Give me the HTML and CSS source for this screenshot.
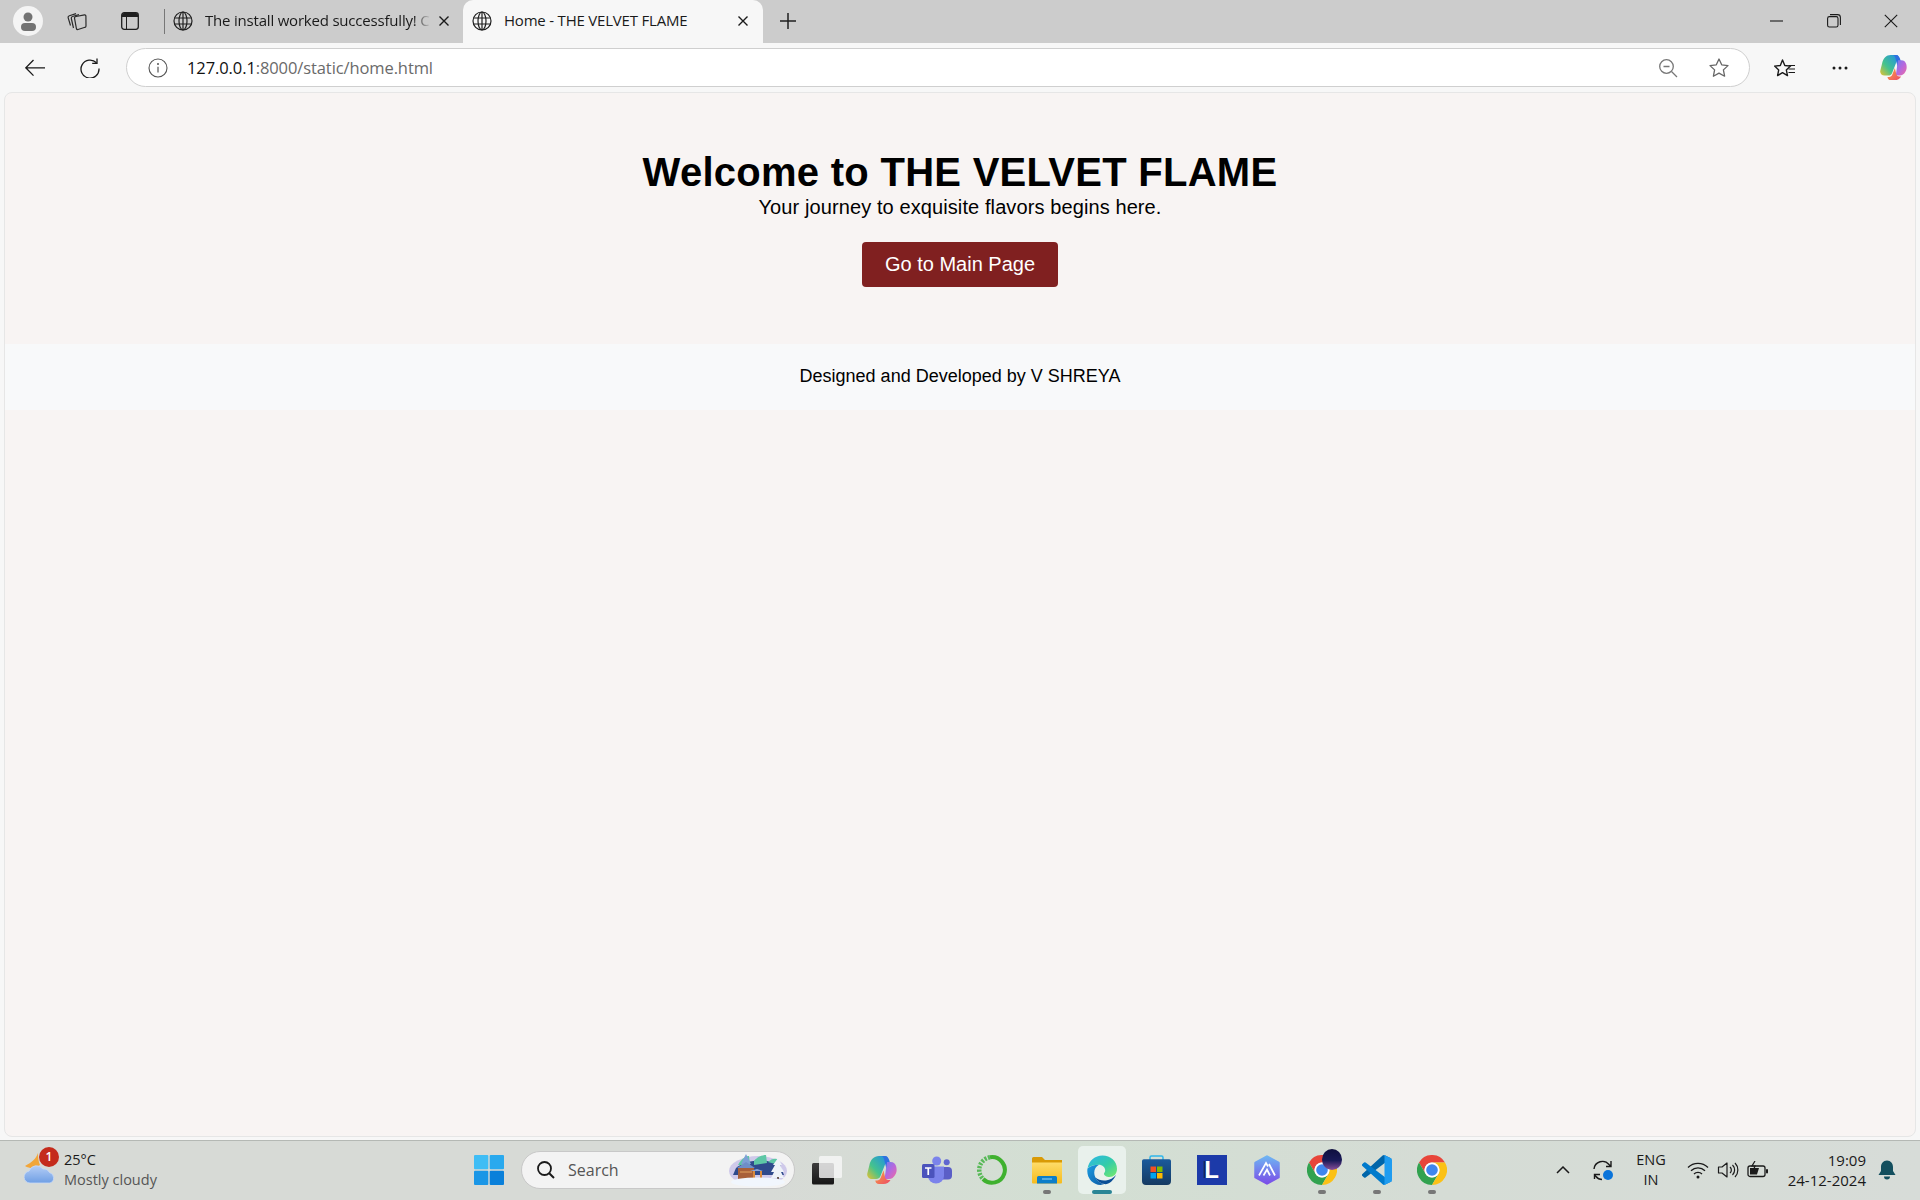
FILE: index.html
```html
<!DOCTYPE html>
<html lang="en">
<head>
    <meta charset="UTF-8">
    <title>Home - THE VELVET FLAME</title>
    <link rel="stylesheet" href="styles.css">
</head>
<body>
    <svg class="defs" width="0" height="0">
        <defs>
            <symbol id="globe" viewBox="0 0 20 20">
                <g fill="none" stroke="#1f1f1f" stroke-width="1.2">
                    <circle cx="10" cy="10" r="9"/>
                    <ellipse cx="10" cy="10" rx="4" ry="9"/>
                    <path d="M1.500 7h17M1.500 13h17M10 1v18"/>
                </g>
            </symbol>
            <symbol id="close" viewBox="0 0 12 12">
                <path d="M1.500 1.500l9 9M10.500 1.500l-9 9" fill="none" stroke="#1a1a1a" stroke-width="1.400"/>
            </symbol>
            <linearGradient id="copilotA" x1="0" y1="1" x2="1" y2="0">
                <stop offset="0" stop-color="#e8c12e"/>
                <stop offset=".4" stop-color="#45c38d"/>
                <stop offset="1" stop-color="#1f8fe6"/>
            </linearGradient>
            <linearGradient id="copilotB" x1="0" y1="0" x2="1" y2="1">
                <stop offset="0" stop-color="#6d7ff0"/>
                <stop offset=".5" stop-color="#b568de"/>
                <stop offset="1" stop-color="#f06aa2"/>
            </linearGradient>
            <linearGradient id="copilotC" x1="0" y1="0" x2="1" y2="1">
                <stop offset="0" stop-color="#f9a63f"/>
                <stop offset="1" stop-color="#ec4a68"/>
            </linearGradient>
            <linearGradient id="edgeA" x1="0" y1="0" x2="1" y2="1">
                <stop offset="0" stop-color="#2bb5ec"/>
                <stop offset=".55" stop-color="#35cda6"/>
                <stop offset="1" stop-color="#78ea6a"/>
            </linearGradient>
            <linearGradient id="edgeB" x1="0" y1="0" x2="1" y2="1">
                <stop offset="0" stop-color="#1b9de2"/>
                <stop offset="1" stop-color="#0c59a4"/>
            </linearGradient>
            <linearGradient id="storeBag" x1="0" y1="0" x2="0" y2="1">
                <stop offset="0" stop-color="#1a5a9c"/>
                <stop offset="1" stop-color="#153a62"/>
            </linearGradient>
            <linearGradient id="folderFront" x1="0" y1="0" x2="0" y2="1">
                <stop offset="0" stop-color="#fedc6a"/>
                <stop offset="1" stop-color="#f6bb1c"/>
            </linearGradient>
            <linearGradient id="hex" x1="0" y1="0" x2="0" y2="1">
                <stop offset="0" stop-color="#6fb4f2"/>
                <stop offset="1" stop-color="#7a4fe8"/>
            </linearGradient>
            <linearGradient id="cloud" x1="0" y1="0" x2="0" y2="1">
                <stop offset="0" stop-color="#b4cdf6"/>
                <stop offset="1" stop-color="#6f9fe4"/>
            </linearGradient>
            <symbol id="copilot" viewBox="0 0 30 30">
                <path d="M12 1h6.500c1.600 0 2.400 1.200 1.800 2.700L13.500 21c-.9 2.200-2.300 3-4.300 3H5C2 24-.3 21.500.3 18.500l2-8C3.500 4.500 7 1 12 1z" fill="url(#copilotA)"/>
                <path d="M17 1c2.800 0 4.500 1.500 5.300 4.300l2.700 10.700h-5l-3-12c-.4-1.600-1-2.500-2.500-3z" fill="#2f6fe0"/>
                <path d="M20 7h3.500c3.200 0 5 1.800 5.700 4.500.9 3.500.3 6-1 8.300-1.500 2.800-3.500 4.200-6.200 4.200h-4.500z" fill="url(#copilotB)"/>
                <path d="M12 29c-2.400 0-3.400-1.300-3.700-3.500H10c2 0 3-1 3.800-3l2.700-7 1.500 6.500c.5 2.300 1.900 3 3.500 3h2c-1.500 2.700-3.800 4-7 4z" fill="url(#copilotC)"/>
            </symbol>
            <symbol id="chrome" viewBox="0 0 30 30">
                <path d="M2 7.500A15 15 0 0 1 28 7.500H15A7.500 7.500 0 0 0 8.500 18.750z" fill="#e8453a"/>
                <path d="M2 7.500L8.500 18.750A7.500 7.500 0 0 0 21.500 18.750L15 30A15 15 0 0 1 2 7.500z" fill="#31a24f"/>
                <path d="M28 7.500A15 15 0 0 1 15 30L21.500 18.750A7.500 7.500 0 0 0 15 7.500z" fill="#fbc116"/>
                <circle cx="15" cy="15" r="7.500" fill="#fff"/>
                <circle cx="15" cy="15" r="5.800" fill="#3f86ee"/>
            </symbol>
        </defs>
    </svg>

    <div class="tabstrip">
        <div class="profile">
            <svg class="icon-profile" viewBox="0 0 30 30"><circle cx="15" cy="15" r="15" fill="#f4f4f4"/><circle cx="15" cy="11" r="4.500" fill="#737373"/><rect x="8" y="17" width="15" height="8" rx="4" fill="#737373"/></svg>
        </div>
        <button class="strip-btn">
            <svg class="icon-20" viewBox="0 0 20 20"><g fill="none" stroke="#2a2a2a" stroke-width="1.200" stroke-linejoin="round"><path d="M9 5.500l8.500-1.700c.7-.1 1.300.3 1.400 1l.1 10.200c0 .7-.4 1.200-1 1.300L11 18.500c-.8.200-1.400-.2-1.600-1L7.500 7.200c-.2-.8.500-1.500 1.500-1.700z"/><path d="M6.500 17L4.300 7.500c-.2-1 .3-1.800 1.200-2L12 3.600"/><path d="M3.500 14.500L1.200 6.800c-.3-1 .2-1.800 1.200-2.100L9 2.600"/></g></svg>
        </button>
        <button class="strip-btn">
            <svg class="icon-workspace" viewBox="0 0 18 18"><rect x=".7" y=".7" width="16.600" height="16.600" rx="2.500" fill="none" stroke="#1f1f1f" stroke-width="1.300"/><path d="M1 3a2 2 0 0 1 2-2h12a2 2 0 0 1 2 2v2H1z" fill="#1f1f1f"/><path d="M5.500 5v12" stroke="#1f1f1f" stroke-width="1"/></svg>
        </button>
        <span class="strip-sep"></span>
        <div class="tab">
            <svg class="icon-globe"><use href="#globe"/></svg>
            <span class="tab-title tab-title-fade">The install worked successfully! C</span>
            <svg class="icon-close"><use href="#close"/></svg>
        </div>
        <div class="tab tab-active">
            <svg class="icon-globe"><use href="#globe"/></svg>
            <span class="tab-title">Home - THE VELVET FLAME</span>
            <svg class="icon-close"><use href="#close"/></svg>
        </div>
        <button class="new-tab">
            <svg class="icon-plus" viewBox="0 0 18 18"><path d="M9 1v16M1 9h16" stroke="#1f1f1f" stroke-width="1.500"/></svg>
        </button>
        <div class="win-controls">
            <svg class="icon-win" viewBox="0 0 14 14"><path d="M0 7h13" stroke="#1a1a1a" stroke-width="1.100"/></svg>
            <svg class="icon-win" viewBox="0 0 14 14"><rect x=".6" y="2.600" width="10.400" height="10.400" rx="1.800" fill="none" stroke="#1a1a1a" stroke-width="1.100"/><path d="M3 .6h7.500c1.600 0 2.900 1.300 2.900 2.900V11" fill="none" stroke="#1a1a1a" stroke-width="1.100"/></svg>
            <svg class="icon-win" viewBox="0 0 14 14"><path d="M.8.8l12.400 12.400M13.200.8L.8 13.200" stroke="#1a1a1a" stroke-width="1.100"/></svg>
        </div>
    </div>

    <div class="toolbar">
        <button class="nav-btn">
            <svg class="icon-20" viewBox="0 0 20 20"><path d="M8.500 2L.8 9.800l7.700 7.800M.8 9.800H20" fill="none" stroke="#1a1a1a" stroke-width="1.300"/></svg>
        </button>
        <button class="nav-btn nav-reload">
            <svg class="icon-20" viewBox="0 0 20 20"><path d="M16.500 4.800A9 9 0 1 0 19 10.500" fill="none" stroke="#1a1a1a" stroke-width="1.300"/><path d="M17 .5V5.300h-4.800" fill="none" stroke="#1a1a1a" stroke-width="1.300"/></svg>
        </button>
        <div class="address">
            <svg class="icon-info" viewBox="0 0 20 20"><circle cx="10" cy="10" r="9" fill="none" stroke="#555" stroke-width="1.100"/><path d="M10 8.800v5.700" stroke="#555" stroke-width="1.200"/><circle cx="10" cy="6" r="1" fill="#555"/></svg>
            <span class="url"><span class="url-host">127.0.0.1</span>:8000/static/home.html</span>
            <svg class="icon-zoom" viewBox="0 0 20 20"><circle cx="8.500" cy="8.500" r="6.800" fill="none" stroke="#777" stroke-width="1.300"/><path d="M13.500 13.500L19 19M5.500 8.500h6" stroke="#777" stroke-width="1.300"/></svg>
            <svg class="icon-star" viewBox="0 0 22 22"><path d="M11 2l2.700 5.800 6.300.8-4.600 4.300 1.200 6.300L11 16.100l-5.600 3.100 1.200-6.300L2 8.600l6.300-.8z" fill="none" stroke="#666" stroke-width="1.300" stroke-linejoin="round"/></svg>
        </div>
        <button class="tool-btn tool-fav">
            <svg class="icon-fav" viewBox="0 0 22 22"><path d="M8.500 1l2.300 5.500 5.700.6-4.200 3.800 1.200 5.700-5-3-4.900 3 1.100-5.700L.6 7.100l5.700-.6z" transform="translate(0 2)" fill="none" stroke="#1a1a1a" stroke-width="1.400" stroke-linejoin="round"/><path d="M14.500 8.500H21M14.500 12H21M14.500 15.500H21" stroke="#1a1a1a" stroke-width="1.200"/></svg>
        </button>
        <button class="tool-btn tool-more">
            <svg class="icon-dots" viewBox="0 0 16 4"><circle cx="2" cy="2" r="1.500" fill="#1a1a1a"/><circle cx="8" cy="2" r="1.500" fill="#1a1a1a"/><circle cx="14" cy="2" r="1.500" fill="#1a1a1a"/></svg>
        </button>
        <button class="tool-btn tool-copilot">
            <svg class="icon-copilot"><use href="#copilot"/></svg>
        </button>
    </div>

    <main class="page">
        <section class="hero">
            <h1>Welcome to THE VELVET FLAME</h1>
            <p>Your journey to exquisite flavors begins here.</p>
            <a class="main-link" href="#">Go to Main Page</a>
        </section>
        <footer class="credit">Designed and Developed by V SHREYA</footer>
    </main>

    <div class="taskbar">
        <div class="weather">
            <div class="weather-icon">
                <svg class="icon-weather" viewBox="0 0 32 38"><path d="M14 2c-2 6-6 9-13 13 5 3 11 3 15-1-1.500-3-2-7-2-12z" fill="#f2a63a"/><path d="M6 32a6 6 0 0 1-1-11.900A8 8 0 0 1 19 18a6.500 6.500 0 0 1 6.500 3.500A5.500 5.500 0 0 1 26 32z" fill="url(#cloud)" stroke="#c9dbf7" stroke-width=".8"/></svg>
                <span class="badge">1</span>
            </div>
            <div class="weather-text">
                <span class="temp">25°C</span>
                <span class="cond">Mostly cloudy</span>
            </div>
        </div>
        <button class="task-start">
            <svg class="icon-start" viewBox="0 0 30 30"><rect width="14.300" height="14.300" rx="1" fill="#3fbdf5"/><rect x="15.700" width="14.300" height="14.300" rx="1" fill="#29a9ee"/><rect y="15.700" width="14.300" height="14.300" rx="1" fill="#1a96e6"/><rect x="15.700" y="15.700" width="14.300" height="14.300" rx="1" fill="#0a80da"/></svg>
        </button>
        <div class="task-search">
            <svg class="icon-search" viewBox="0 0 20 20"><circle cx="8.500" cy="8.500" r="6.500" fill="none" stroke="#1a1a1a" stroke-width="1.800"/><path d="M13.200 13.200L18 18" stroke="#1a1a1a" stroke-width="2"/></svg>
            <span class="search-label">Search</span>
            <svg class="search-art" viewBox="0 0 60 34">
                <ellipse cx="30" cy="18" rx="29" ry="15" fill="#cfc9ea"/>
                <path d="M8 15c10-9 32-10 44-3l4 10H5z" fill="#2f4a8c"/>
                <path d="M10 12c4-7 8-9 11-9l1 9zM26 8c3-4 8-6 12-6l1 8-13 2zM40 9c3-3 6-4 9-3l2 6z" fill="#5ec7a6"/>
                <path d="M18 1l5 10H13z" fill="#7ea0d6"/>
                <path d="M9 15l9-6 9 6z" fill="#6f8ec8"/>
                <rect x="10" y="15" width="16" height="11" fill="#a8603a"/>
                <path d="M12 19h12" stroke="#e3a25f" stroke-width="1"/>
                <path d="M22 18l7-2 6 2z" fill="#8aa6d8"/>
                <path d="M25 18h2v8h-2zM32 18h2v8h-2z" fill="#d98a3d"/>
                <path d="M50 5l4 7h-2l4 7h-3l3 6H43l3-6h-3l4-7h-2z" fill="#eef2f8"/>
                <rect x="49" y="24" width="2" height="4" fill="#6a5a55"/>
                <ellipse cx="30" cy="29" rx="27" ry="4.500" fill="#f1f6fd"/>
            </svg>
        </div>
        <div class="task-apps">
            <button class="app">
                <svg class="icon-app" viewBox="0 0 30 30"><defs><linearGradient id="tileDark" x1="0" y1="0" x2="0" y2="1"><stop offset="0" stop-color="#3c3c3c"/><stop offset="1" stop-color="#161616"/></linearGradient></defs><rect x="0" y="8" width="22" height="21.500" rx="1.500" fill="url(#tileDark)"/><rect x="7" y="1" width="23" height="22" rx="1.500" fill="#f6f6f6" fill-opacity=".82"/></svg>
            </button>
            <button class="app">
                <svg class="icon-app"><use href="#copilot"/></svg>
            </button>
            <button class="app">
                <svg class="icon-app" viewBox="0 0 30 30"><circle cx="24.700" cy="7.300" r="3" fill="#5f66d0"/><rect x="17" y="12" width="13" height="12.500" rx="4" fill="#5b5fc7"/><circle cx="14.700" cy="6" r="4.500" fill="#7b83eb"/><path d="M6 11.500h16v9.500a8 7.500 0 0 1-16 0z" fill="#7b83eb"/><rect x="0" y="9" width="12.500" height="14" rx="1.500" fill="#4b53bc"/><path d="M3 12.300h6.500v1.500H7.100v6.200H5.400v-6.200H3z" fill="#fff"/></svg>
            </button>
            <button class="app">
                <svg class="icon-app" viewBox="0 0 30 30"><path d="M13 2.300A12.800 12.800 0 1 1 6 24" fill="none" stroke="#3fb12f" stroke-width="4"/><path d="M13 2.300A12.800 12.800 0 0 0 6 24" fill="none" stroke="#58b958" stroke-width="4.500" stroke-dasharray="2.200 1.300"/></svg>
            </button>
            <button class="app app-open">
                <svg class="icon-app" viewBox="0 0 30 30"><path d="M0 3.500A1.500 1.500 0 0 1 1.500 2H10l3 3h17v20H0z" fill="#d99a06"/><path d="M0 7.500h30v20a1 1 0 0 1-1 1H1a1 1 0 0 1-1-1z" fill="url(#folderFront)"/><path d="M6.500 21h17A1.500 1.500 0 0 1 25 22.500v6H5v-6A1.500 1.500 0 0 1 6.500 21z" fill="#0c7ec9"/><path d="M10 24h10" stroke="#8fd0f5" stroke-width="1.100"/></svg>
            </button>
            <button class="app app-active">
                <svg class="icon-app icon-edge" viewBox="0 0 30 30"><path d="M.5 13.500C2 5.500 8 .5 15.500.5 23.500.5 30 6 30 14c0 5-3.500 8-7.500 8-3 0-5.500-1.300-5.500-3.200 0-1 1.200-1.500 1.200-3.500 0-3-2.700-5.500-6.500-5.500-5 0-9 1.500-11.700 3.700z" fill="url(#edgeA)"/><path d="M.5 13.500C3 11.200 7 9.800 12 9.800c-4.500 2.500-6 7.500-3.700 12.500 1.700 3.500 5 6 9 6.800-1 .4-2.300.9-3.800.9C5.500 30-1 22.500.5 13.500z" fill="url(#edgeB)"/><path d="M29 20c-2.800 6-7.500 9.800-11.700 9.100-4-.8-7.300-3.300-9-6.800 3 2.700 6.700 3.700 10.700 3.200 4-.5 7.500-2.600 10-5.500z" fill="#0b4f96"/></svg>
            </button>
            <button class="app">
                <svg class="icon-app" viewBox="0 0 30 30"><path d="M8 5V2.500A1.500 1.500 0 0 1 9.500 1h10A1.500 1.500 0 0 1 21 2.500V5" fill="none" stroke="#2fb6ea" stroke-width="1.500"/><path d="M0 6a1.800 1.800 0 0 1 1.800-1.800h25.400A1.800 1.800 0 0 1 29 6v20a4 4 0 0 1-4 4H4a4 4 0 0 1-4-4z" fill="url(#storeBag)"/><rect x="8.500" y="11.500" width="5.500" height="5.500" fill="#f25022"/><rect x="15" y="11.500" width="5.500" height="5.500" fill="#7fba00"/><rect x="8.500" y="18" width="5.500" height="5.500" fill="#00a4ef"/><rect x="15" y="18" width="5.500" height="5.500" fill="#ffb900"/></svg>
            </button>
            <button class="app">
                <span class="app-letter">L</span>
            </button>
            <button class="app">
                <svg class="icon-app" viewBox="0 0 30 30"><path d="M15 1.500l11.500 6.300v14.400L15 28.500 3.500 22.200V7.800z" fill="url(#hex)" stroke="url(#hex)" stroke-width="2.500" stroke-linejoin="round"/><path d="M7 20.500L14 8l2 3.500M11.500 20.500l3.500-6 3 6M17 9l6 11.500" fill="none" stroke="#fff" stroke-width="1.700"/></svg>
            </button>
            <button class="app app-open">
                <svg class="icon-app"><use href="#chrome"/></svg>
                <span class="app-blob"></span>
            </button>
            <button class="app app-open">
                <svg class="icon-app" viewBox="0 0 100 100"><path d="M96.460 10.800L75.860.870a6.230 6.230 0 0 0-7.110 1.210L1.300 63.580a4.170 4.170 0 0 0 0 6.160l5.510 5.010a4.170 4.170 0 0 0 5.320.24L93.370 13.370c2.730-2.070 6.640-.13 6.640 3.300v-.24a6.250 6.250 0 0 0-3.540-5.630z" fill="#0065a9"/><path d="M96.460 89.200l-20.600 9.920a6.230 6.230 0 0 1-7.110-1.210L1.300 36.420a4.170 4.170 0 0 1 0-6.160l5.510-5.010a4.170 4.170 0 0 1 5.320-.24l81.240 61.620c2.730 2.070 6.640.13 6.640-3.300v.24a6.250 6.250 0 0 1-3.540 5.630z" fill="#007acc"/><path d="M75.860 99.130a6.230 6.230 0 0 1-7.110-1.200c2.310 2.310 6.250.67 6.250-2.600V4.670c0-3.270-3.940-4.900-6.250-2.600a6.230 6.230 0 0 1 7.110-1.200l20.600 9.910A6.250 6.250 0 0 1 100 16.430v67.140a6.250 6.250 0 0 1-3.540 5.630z" fill="#1f9cf0"/></svg>
            </button>
            <button class="app app-open">
                <svg class="icon-app"><use href="#chrome"/></svg>
            </button>
        </div>
        <div class="tray">
            <svg class="icon-chevron" viewBox="0 0 14 8"><path d="M1 7l6-6 6 6" fill="none" stroke="#1a1a1a" stroke-width="1.500"/></svg>
            <div class="tray-sync">
                <svg class="icon-sync" viewBox="0 0 22 22"><path d="M2 10a8.500 8.500 0 0 1 15-4.500l2 2M19 2v5.500h-5" fill="none" stroke="#1a1a1a" stroke-width="1.400"/><path d="M10 20.500a8 8 0 0 1-6-3l-1.500-1.500M2.500 20v-4.500H8" fill="none" stroke="#1a1a1a" stroke-width="1.400"/><circle cx="16" cy="16" r="5" fill="#0a74da"/></svg>
            </div>
            <div class="lang"><span>ENG</span><span>IN</span></div>
            <svg class="icon-wifi" viewBox="0 0 22 18"><path d="M1 6.500a14 14 0 0 1 20 0M4 9.800a10 10 0 0 1 14 0M7 13a5.600 5.600 0 0 1 8 0" fill="none" stroke="#1a1a1a" stroke-width="1.300"/><circle cx="11" cy="16" r="1.500" fill="#1a1a1a"/></svg>
            <svg class="icon-vol" viewBox="0 0 22 18"><path d="M1.500 6h3.500L10 2v14l-5-4H1.500z" fill="none" stroke="#1a1a1a" stroke-width="1.200" stroke-linejoin="round"/><path d="M13 6a4 4 0 0 1 0 6M15.500 4a7 7 0 0 1 0 10M18 2a10 10 0 0 1 0 14" fill="none" stroke="#1a1a1a" stroke-width="1.200"/></svg>
            <svg class="icon-batt" viewBox="0 0 22 18"><rect x="1" y="5" width="17" height="10.500" rx="2" fill="none" stroke="#1a1a1a" stroke-width="1.300"/><path d="M3 7h9l-2 6.500H3z" fill="#1a1a1a"/><rect x="19" y="8" width="2" height="4.500" rx="1" fill="#1a1a1a"/><path d="M8 0l-3 5h3l-1.500 4" fill="none" stroke="#1a1a1a" stroke-width="1.200"/></svg>
            <div class="clock"><span>19:09</span><span>24-12-2024</span></div>
            <svg class="icon-bell" viewBox="0 0 18 20"><path d="M9 .5c3.800 0 6 3 6 6.500v4l2.500 4h-17L3 11V7C3 3.500 5.200.5 9 .5z" fill="#134f5e"/><path d="M6 16.500h6a3 3 0 0 1-6 0z" fill="#134f5e"/></svg>
        </div>
    </div>
</body>
</html>
```

FILE: styles.css
```css
* {
    box-sizing: border-box;
}

html, body {
    margin: 0;
    padding: 0;
    height: 1200px;
    overflow: hidden;
}

body {
    display: flex;
    flex-direction: column;
    font-family: "Open Sans", "Noto Sans", sans-serif;
    background-color: #f7f7f7;
    color: #1a1a1a;
}

button {
    background: none;
    border: none;
    padding: 0;
    display: flex;
    align-items: center;
    justify-content: center;
}

svg {
    display: block;
    flex: none;
}

.defs {
    position: absolute;
}

.icon-20 {
    width: 20px;
    height: 20px;
}

/* tab strip */
.tabstrip {
    height: 43px;
    flex: none;
    display: flex;
    align-items: center;
    background-color: #cccccc;
    padding: 0 0 1px 13px;
}

.profile {
    width: 30px;
    height: 30px;
    margin-right: 19px;
}

.icon-profile {
    width: 30px;
    height: 30px;
}

.strip-btn {
    width: 30px;
    height: 30px;
    margin-right: 23px;
}

.strip-btn + .strip-btn {
    margin-right: 19px;
}

.icon-workspace {
    width: 18px;
    height: 18px;
}

.strip-sep {
    width: 1px;
    height: 25px;
    background-color: #777;
}

.tab {
    width: 298px;
    height: 43px;
    align-self: flex-start;
    display: flex;
    align-items: center;
    padding: 0 0 1px 8px;
    font-size: 15px;
}

.tab-active {
    width: 300px;
    background-color: #f7f7f7;
    border-radius: 10px 10px 0 0;
    padding-left: 9px;
}

.icon-globe {
    width: 20px;
    height: 20px;
    margin-right: 12px;
}

.tab-title {
    width: 226px;
    white-space: nowrap;
    letter-spacing: -.2px;
    margin-top: -2px;
}

.tab-title-fade {
    -webkit-mask-image: linear-gradient(to right, #000 92%, transparent 100%);
    mask-image: linear-gradient(to right, #000 92%, transparent 100%);
}

.icon-close {
    width: 12px;
    height: 12px;
    margin-left: 7px;
}

.new-tab {
    width: 50px;
    height: 43px;
    align-self: flex-start;
    padding-bottom: 1px;
}

.icon-plus {
    width: 18px;
    height: 18px;
}

.win-controls {
    margin-left: auto;
    display: flex;
    align-items: center;
    gap: 43px;
    padding-right: 22px;
}

.icon-win {
    width: 14px;
    height: 14px;
}

/* address bar row */
.toolbar {
    height: 49px;
    flex: none;
    display: flex;
    align-items: flex-start;
    background-color: #f7f7f7;
    padding: 5px 0 0 25px;
}

.nav-btn {
    width: 20px;
    height: 39px;
    margin-right: 35px;
}

.nav-reload {
    margin-right: 26px;
}

.address {
    width: 1624px;
    height: 39px;
    display: flex;
    align-items: center;
    background-color: #fff;
    border: 1px solid #cfcfcf;
    border-radius: 20px;
    padding-left: 21px;
}

.icon-info {
    width: 20px;
    height: 20px;
    margin-right: 19px;
}

.url {
    font-size: 16.5px;
    letter-spacing: -.1px;
    color: #6a6a6a;
}

.url-host {
    color: #111;
}

.icon-zoom {
    width: 20px;
    height: 20px;
    margin-left: auto;
    margin-right: 30px;
}

.icon-star {
    width: 22px;
    height: 22px;
    margin-right: 19px;
}

.tool-btn {
    height: 39px;
}

.tool-fav {
    width: 22px;
    margin-left: 24px;
}

.icon-fav {
    width: 22px;
    height: 22px;
}

.tool-more {
    width: 16px;
    margin-left: 36px;
}

.icon-dots {
    width: 16px;
    height: 4px;
}

.tool-copilot {
    width: 30px;
    margin-left: 30px;
}

.icon-copilot {
    width: 27px;
    height: 27px;
}

/* page */
.page {
    height: 1045px;
    flex: none;
    margin: 0 4px;
    background-color: #f8f4f3;
    border: 1px solid #e6e6e6;
    border-radius: 8px;
    text-align: center;
    font-family: "Liberation Sans", Arial, sans-serif;
    color: #000;
}

.hero {
    padding-top: 56px;
    height: 251px;
}

.hero h1 {
    margin: 0;
    font-size: 40px;
    line-height: 46px;
    font-weight: bold;
    letter-spacing: .27px;
}

.hero p {
    margin: 1px 0 0;
    font-size: 20px;
    line-height: 23px;
    letter-spacing: .1px;
}

.main-link {
    display: inline-block;
    margin-top: 23px;
    padding: 10px 23px;
    font-size: 20px;
    line-height: 25px;
    color: #fff;
    background-color: #802020;
    border-radius: 4px;
    text-decoration: none;
}

.credit {
    background-color: #f8f9fa;
    padding: 22px 0 23px;
    font-size: 18px;
    line-height: 21px;
}

/* taskbar */
.taskbar {
    position: fixed;
    left: 0;
    right: 0;
    bottom: 0;
    height: 60px;
    display: flex;
    align-items: center;
    padding-bottom: 1px;
    background: linear-gradient(90deg, #d7dad6 0%, #d7dad6 40%, #d3dfd3 55%, #d5dcd5 75%, #d7dcd8 100%);
    border-top: 1px solid #b4b8b4;
}

.weather {
    width: 464px;
    display: flex;
    align-items: center;
    padding-left: 24px;
}

.weather-icon {
    position: relative;
    width: 32px;
    height: 38px;
    margin-right: 8px;
}

.icon-weather {
    width: 32px;
    height: 38px;
}

.badge {
    position: absolute;
    left: 15px;
    top: -4px;
    width: 20px;
    height: 20px;
    border-radius: 50%;
    background-color: #c42b1c;
    color: #fff;
    font-size: 12px;
    font-weight: 600;
    line-height: 20px;
    text-align: center;
}

.weather-text {
    display: flex;
    flex-direction: column;
    font-size: 14.5px;
    line-height: 20px;
}

.temp {
    color: #1a1a1a;
}

.cond {
    color: #555;
}

.task-start {
    width: 50px;
    height: 58px;
}

.icon-start {
    width: 30px;
    height: 30px;
}

.task-search {
    width: 274px;
    height: 38px;
    margin-left: 7px;
    display: flex;
    align-items: center;
    background-color: #f3f3f3;
    border: 1px solid #c8c8c8;
    border-radius: 19px;
    padding-left: 14px;
}

.icon-search {
    width: 20px;
    height: 20px;
    margin-right: 12px;
}

.search-label {
    font-size: 16px;
    color: #555;
}

.search-art {
    width: 60px;
    height: 34px;
    margin-left: auto;
    margin-right: 6px;
}

.task-apps {
    display: flex;
    align-items: center;
    margin-left: 4px;
}

.app {
    position: relative;
    width: 55px;
    height: 48px;
}

.icon-app {
    width: 30px;
    height: 30px;
}

.app-open::after {
    content: "";
    position: absolute;
    left: 50%;
    bottom: 0;
    width: 8px;
    height: 4px;
    margin-left: -4px;
    border-radius: 2px;
    background-color: #777;
}

.app-active::before {
    content: "";
    position: absolute;
    left: 4px;
    top: 0;
    width: 48px;
    height: 48px;
    border-radius: 5px;
    background-color: #e9f1ec;
}

.app-active::after {
    content: "";
    position: absolute;
    left: 50%;
    bottom: 0;
    width: 20px;
    height: 4px;
    margin-left: -10px;
    border-radius: 2px;
    background-color: #2a8595;
}

.icon-edge {
    position: relative;
}

.app-letter {
    width: 30px;
    height: 30px;
    background-color: #1c3aa9;
    color: #fff;
    font-family: "Liberation Sans", Arial, sans-serif;
    font-size: 24px;
    font-weight: bold;
    line-height: 30px;
    text-align: center;
    text-shadow: -2px 0 #12245f;
}

.app-blob {
    position: absolute;
    left: 28px;
    top: 3px;
    width: 20px;
    height: 21px;
    border-radius: 50%;
    background: linear-gradient(#0f0f3e, #1a1a58 55%, #8a4f9a);
}

.tray {
    display: flex;
    align-items: center;
    margin-left: 83px;
}

.icon-chevron {
    width: 14px;
    height: 8px;
    margin: 0 11px 0 14px;
}

.tray-sync {
    margin-left: 11px;
}

.icon-sync {
    width: 22px;
    height: 22px;
}

.lang {
    width: 42px;
    margin-left: 16px;
    display: flex;
    flex-direction: column;
    align-items: center;
    font-size: 14.5px;
    line-height: 20px;
}

.icon-wifi {
    width: 22px;
    height: 18px;
    margin-left: 15px;
}

.icon-vol {
    width: 22px;
    height: 18px;
    margin-left: 8px;
}

.icon-batt {
    width: 22px;
    height: 18px;
    margin-left: 8px;
}

.clock {
    width: 97px;
    display: flex;
    flex-direction: column;
    align-items: flex-end;
    font-size: 15px;
    line-height: 20px;
}

.icon-bell {
    width: 18px;
    height: 20px;
    margin-left: 12px;
}
```
